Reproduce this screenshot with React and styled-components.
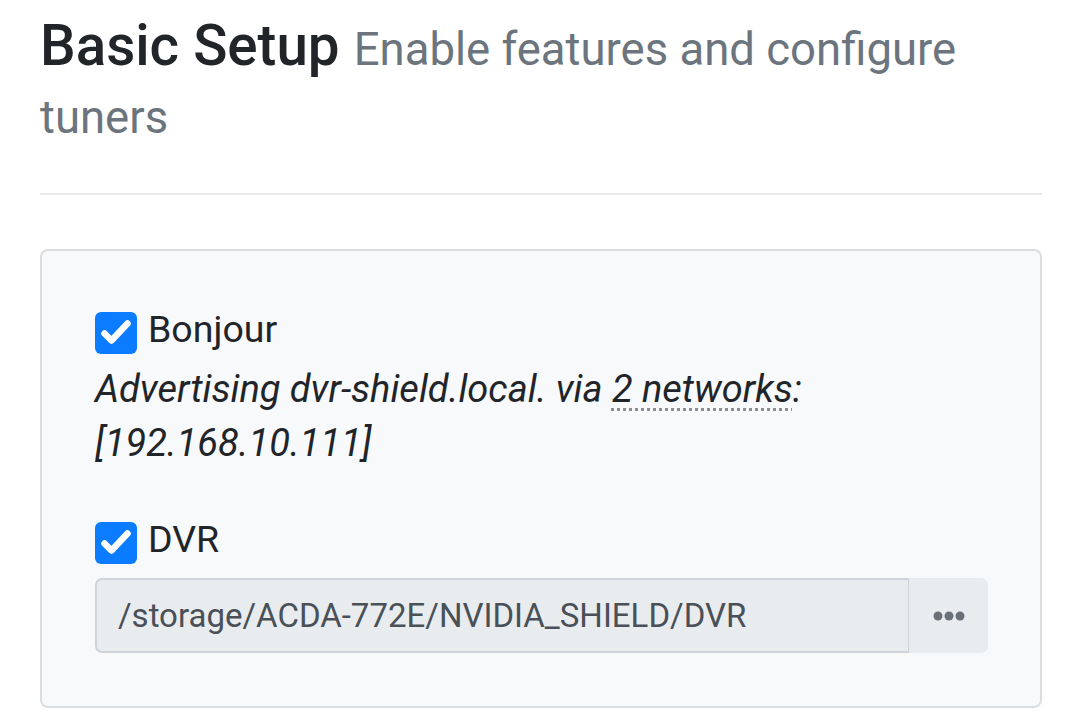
import styled, { createGlobalStyle } from 'styled-components';

const GlobalStyle = createGlobalStyle`
	html, body {
		margin: 0;
		padding: 0;
		background: #ffffff;
	}
	body {
		font-family: Roboto, 'Liberation Sans', sans-serif;
		color: #212529;
	}
`;

const Page = styled.div`
	width: 1080px;
	box-sizing: border-box;
	padding: 12px 38px 0 40px;
`;

const Heading = styled.h2`
	margin: 0;
	font-size: 56.5px;
	line-height: 68px;
	font-weight: 500;
	color: #212529;
`;

const Subtitle = styled.small`
	font-size: 45.5px;
	line-height: 1;
	font-weight: 400;
	color: #6c757d;
`;

const Divider = styled.hr`
	margin: 45px 0 54px;
	border: 0;
	border-top: 2px solid #e9e9e9;
`;

const Well = styled.div`
	background: #f8f9fa;
	border: 2px solid #dcdde0;
	border-radius: 8px;
	padding: 52px 53px 53px;
`;

const Field = styled.div`
	margin-bottom: ${(p) => p.$gap || 0}px;
`;

const CheckRow = styled.label`
	display: flex;
	align-items: center;
	gap: 11px;
	font-size: 37.5px;
	line-height: 52px;
`;

const Box = styled.span`
	width: 42px;
	height: 42px;
	margin-top: 7px;
	border-radius: 6px;
	background: #0b7bff;
	display: flex;
	align-items: center;
	justify-content: center;
	flex: none;
`;

const Note = styled.p`
	margin: 7px 0 0;
	font-size: 38px;
	line-height: 54px;
	font-style: italic;
`;

const Abbr = styled.abbr`
	text-decoration: underline dotted #8a8f95;
	text-underline-offset: 6px;
	text-decoration-thickness: 3px;
	cursor: help;
`;

const InputGroup = styled.div`
	display: flex;
	width: 893px;
	height: 75px;
	margin-top: 13px;
`;

const Input = styled.div`
	flex: 1;
	box-sizing: border-box;
	background: #e9ecef;
	border: 2px solid #ced4da;
	border-right-width: 1px;
	border-radius: 7px 0 0 7px;
	padding: 0 21px;
	display: flex;
	align-items: center;
	font-size: 33px;
	color: #495057;
`;

const MoreButton = styled.button`
	width: 79px;
	border: 0;
	border-radius: 0 7px 7px 0;
	background: #e9ecef;
	display: flex;
	align-items: center;
	justify-content: center;
	padding: 0;
`;

const Check = () => (
	<Box>
		<svg width="42" height="42" viewBox="0 0 42 42">
			<path d="M9.5 21.5L16.5 28.5L32.5 11.5" fill="none" stroke="#fff" strokeWidth="6.5" strokeLinecap="round" strokeLinejoin="round" />
		</svg>
	</Box>
);

const Dots = () => (
	<svg width="32" height="10" viewBox="0 0 32 10">
		<circle cx="5" cy="5" r="4.5" fill="#6a7077" />
		<circle cx="16" cy="5" r="4.5" fill="#6a7077" />
		<circle cx="27" cy="5" r="4.5" fill="#6a7077" />
	</svg>
);

const App = () => {
	return (
		<Page>
			<GlobalStyle />
			<Heading>
				Basic Setup <Subtitle>Enable features and configure tuners</Subtitle>
			</Heading>
			<Divider />
			<Well>
				<Field $gap={43}>
					<CheckRow>
						<Check />
						Bonjour
					</CheckRow>
					<Note>
						Advertising dvr-shield.local. via <Abbr title="192.168.10.111">2 networks</Abbr>:
						<br />
						[192.168.10.111]
					</Note>
				</Field>
				<Field>
					<CheckRow>
						<Check />
						DVR
					</CheckRow>
					<InputGroup>
						<Input>/storage/ACDA-772E/NVIDIA_SHIELD/DVR</Input>
						<MoreButton>
							<Dots />
						</MoreButton>
					</InputGroup>
				</Field>
			</Well>
		</Page>
	);
};

export default App;
